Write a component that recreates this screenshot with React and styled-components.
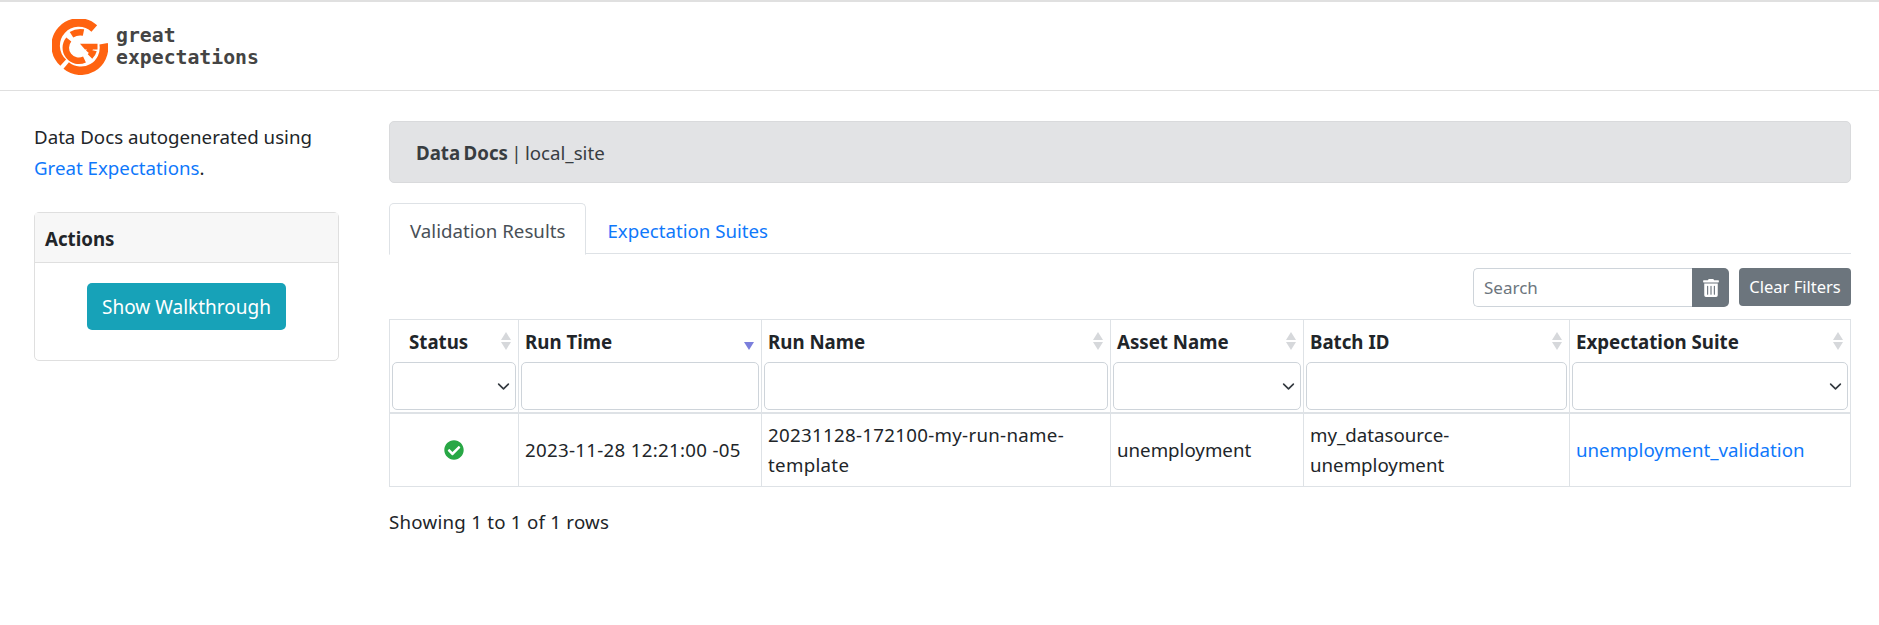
import styled, { createGlobalStyle } from "styled-components";
import { FaTrashAlt, FaCheckCircle } from "react-icons/fa";

const Global = createGlobalStyle`
  body {
    margin: 0;
    background: #fff;
    font-family: "Noto Sans", "Open Sans", sans-serif;
    font-size: 18.7px;
    line-height: 30px;
    color: #212529;
  }
  * { box-sizing: border-box; }
`;

const columns = [
  { title: "Status", width: 129, filter: "select", indent: 19 },
  { title: "Run Time", width: 243, filter: "input", sorted: true },
  { title: "Run Name", width: 349, filter: "input" },
  { title: "Asset Name", width: 193, filter: "select" },
  { title: "Batch ID", width: 266, filter: "input" },
  { title: "Expectation Suite", width: 281, filter: "select" },
];

const Logo = () => (
  <svg width="56" height="56" viewBox="0 0 56 56">
    <g fill="none" stroke="#ff6310">
      <g strokeWidth="8.5">
        <path d="M42.3 9.5 A23 23 0 0 0 11.2 43.7" />
        <path d="M14.2 46.4 A23 23 0 0 0 51.6 24.7" />
      </g>
      <g strokeWidth="6.5">
        <path d="M16.8 20.5 A13 13 0 0 0 32.5 40.5" />
        <path d="M38 37.5 A13 13 0 0 0 41.6 31.5" />
        <path d="M19.5 15.8 A16 16 0 0 1 31.5 13.5" />
      </g>
    </g>
    <path d="M28 24.7 H45.5 V30.5 H41 L37.5 34.5 L34 31.5 L35 30.5 H33 Z" fill="#ff6310" />
  </svg>
);

const SortArrows = ({ sorted }) => (
  <svg width="12" height="20" viewBox="0 0 12 20">
    {sorted ? (
      <path d="M1 11 H11 L6 19 Z" fill="#7b7fdc" />
    ) : (
      <>
        <path d="M1 9 H11 L6 1 Z" fill="#d6d8db" />
        <path d="M1 11 H11 L6 19 Z" fill="#d6d8db" />
      </>
    )}
  </svg>
);

const App = () => {
  return (
    <>
      <Global />
      <TopBar>
        <Brand>
          <Logo />
          <BrandName>great<br />expectations</BrandName>
        </Brand>
      </TopBar>
      <Body>
        <Sidebar>
          <Intro>
            Data Docs autogenerated using <Link>Great Expectations</Link>.
          </Intro>
          <Card>
            <CardHeader>Actions</CardHeader>
            <CardBody>
              <InfoButton>Show Walkthrough</InfoButton>
            </CardBody>
          </Card>
        </Sidebar>
        <Main>
          <Breadcrumb>
            <strong>Data Docs</strong> | local_site
          </Breadcrumb>
          <Tabs>
            <Tab $active>Validation Results</Tab>
            <Tab>Expectation Suites</Tab>
          </Tabs>
          <Toolbar>
            <SearchGroup>
              <SearchInput placeholder="Search" />
              <TrashButton><FaTrashAlt size={18} /></TrashButton>
            </SearchGroup>
            <ClearButton>Clear Filters</ClearButton>
          </Toolbar>
          <Table>
            <thead>
              <tr>
                {columns.map((col) => (
                  <HeadCell key={col.title} $width={col.width}>
                    <HeadTitle $indent={col.indent}>
                      {col.title}
                      <SortIcon><SortArrows sorted={col.sorted} /></SortIcon>
                    </HeadTitle>
                    <FilterWrap>
                      {col.filter === "select" ? <FilterSelect /> : <FilterInput />}
                    </FilterWrap>
                  </HeadCell>
                ))}
              </tr>
            </thead>
            <tbody>
              <tr>
                <Cell><FaCheckCircle size={20} color="#28a745" /></Cell>
                <Cell $digits>2023-11-28 12:21:00 -05</Cell>
                <Cell $digits>20231128-172100-my-run-name-template</Cell>
                <Cell>unemployment</Cell>
                <Cell>my_datasource-unemployment</Cell>
                <Cell><Link>unemployment_validation</Link></Cell>
              </tr>
            </tbody>
          </Table>
          <Pagination>Showing 1 to 1 of 1 rows</Pagination>
        </Main>
      </Body>
    </>
  );
};

export default App;

const TopBar = styled.header`
  height: 91px;
  border-top: 2px solid #e0e0e0;
  border-bottom: 1px solid #dfdfdf;
  padding: 17px 0 0 52px;
`;

const Brand = styled.div`
  display: flex;
  align-items: center;
  gap: 8px;
`;

const BrandName = styled.div`
  font-family: "DejaVu Sans Mono", monospace;
  font-size: 19.8px;
  font-weight: 700;
  line-height: 22px;
  color: #444;
`;

const Body = styled.div`
  display: flex;
  padding: 30px 28px 0 34px;
`;

const Sidebar = styled.aside`
  width: 306px;
  margin-right: 50px;
`;

const Intro = styled.p`
  margin: 0 0 29px;
  line-height: 31px;
`;

const Link = styled.a`
  color: #0f78fb;
  cursor: pointer;
`;

const Card = styled.div`
  border: 1px solid #dfdfdf;
  border-radius: 5px;
  height: 149px;
`;

const CardHeader = styled.div`
  height: 50px;
  padding: 11px 10px;
  font-weight: 700;
  background: #f7f7f7;
  border-bottom: 1px solid #dfdfdf;
`;

const CardBody = styled.div`
  display: flex;
  justify-content: center;
  padding-top: 20px;
`;

const InfoButton = styled.button`
  width: 199px;
  height: 47px;
  border: none;
  border-radius: 5px;
  background: #17a2b8;
  color: #fff;
  font: inherit;
  font-size: 19px;
`;

const Main = styled.main`
  flex: 1;
`;

const Breadcrumb = styled.div`
  height: 62px;
  padding: 16px 26px;
  background: #e2e3e5;
  border: 1px solid #d9dadc;
  border-radius: 5px;
  color: #383d41;
  margin-bottom: 20px;
  word-spacing: -1.5px;
`;

const Tabs = styled.div`
  display: flex;
  height: 51px;
  border-bottom: 1px solid #dee2e6;
`;

const Tab = styled.div`
  height: 52px;
  padding: 12px 20px 0;
  border-radius: 5px 5px 0 0;
  border: 1px solid ${(p) => (p.$active ? "#dee2e6" : "transparent")};
  border-bottom-color: ${(p) => (p.$active ? "#fff" : "transparent")};
  background: ${(p) => (p.$active ? "#fff" : "transparent")};
  color: ${(p) => (p.$active ? "#495057" : "#0f78fb")};
`;

const Toolbar = styled.div`
  display: flex;
  justify-content: flex-end;
  gap: 10px;
  margin: 14px 0 12px;
`;

const SearchGroup = styled.div`
  display: flex;
`;

const SearchInput = styled.input`
  width: 219px;
  height: 39px;
  padding: 0 10px;
  border: 1px solid #ced4da;
  border-right: none;
  border-radius: 5px 0 0 5px;
  font: inherit;
  font-size: 17px;
  outline: none;
  &::placeholder { color: #6c757d; }
`;

const TrashButton = styled.button`
  display: flex;
  align-items: center;
  justify-content: center;
  width: 37px;
  height: 39px;
  border: none;
  border-radius: 0 5px 5px 0;
  background: #6c757d;
  color: #fff;
`;

const ClearButton = styled.button`
  width: 112px;
  height: 38px;
  padding: 0;
  border: none;
  border-radius: 4px;
  background: #6c757d;
  color: #fff;
  font: inherit;
  font-size: 16.5px;
`;

const Table = styled.table`
  width: 1461px;
  table-layout: fixed;
  border-collapse: collapse;
`;

const HeadCell = styled.th`
  width: ${(p) => p.$width}px;
  padding: 0;
  border: 1px solid #dee2e6;
  border-bottom: 2px solid #dee2e6;
  text-align: left;
  vertical-align: top;
`;

const HeadTitle = styled.div`
  position: relative;
  height: 42px;
  padding: 7px 6px 0 ${(p) => p.$indent || 6}px;
  white-space: nowrap;
`;

const SortIcon = styled.span`
  position: absolute;
  top: 11px;
  right: 6px;
  line-height: 0;
`;

const FilterWrap = styled.div`
  padding: 0 2px 2px;
`;

const FilterInput = styled.input`
  display: block;
  width: 100%;
  height: 48px;
  border: 1px solid #ced4da;
  border-radius: 5px;
  outline: none;
`;

const FilterSelect = styled.select`
  display: block;
  width: 100%;
  height: 48px;
  appearance: none;
  border: 1px solid #ced4da;
  border-radius: 5px;
  outline: none;
  background: #fff url("data:image/svg+xml,%3csvg xmlns='http://www.w3.org/2000/svg' viewBox='0 0 16 16'%3e%3cpath fill='none' stroke='%23343a40' stroke-linecap='round' stroke-linejoin='round' stroke-width='2' d='M2 5l6 6 6-6'/%3e%3c/svg%3e") no-repeat right 5px center / 13px 13px;
`;

const Cell = styled.td`
  height: 73px;
  padding: 4px 6px;
  border: 1px solid #dee2e6;
  vertical-align: middle;
  letter-spacing: ${(p) => (p.$digits ? "0.3px" : "normal")};
  svg { display: block; margin: 0 auto; }
`;

const Pagination = styled.div`
  margin-top: 20px;
  letter-spacing: 0.25px;
`;
